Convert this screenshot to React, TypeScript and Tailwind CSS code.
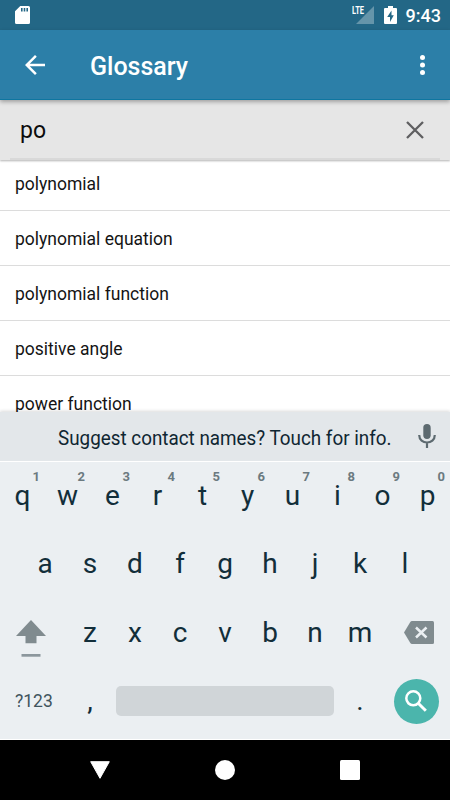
import React, { useState } from 'react';

// Define the type for a letter key
interface KeyItem {
    label: string;
    hint?: string;
}

const terms: string[] = [
    'polynomial',
    'polynomial equation',
    'polynomial function',
    'positive angle',
    'power function',
];

const topRow: KeyItem[] = [
    { label: 'q', hint: '1' },
    { label: 'w', hint: '2' },
    { label: 'e', hint: '3' },
    { label: 'r', hint: '4' },
    { label: 't', hint: '5' },
    { label: 'y', hint: '6' },
    { label: 'u', hint: '7' },
    { label: 'i', hint: '8' },
    { label: 'o', hint: '9' },
    { label: 'p', hint: '0' },
];

const middleRow: KeyItem[] = 'asdfghjkl'.split('').map((label) => ({ label }));
const bottomRow: KeyItem[] = 'zxcvbnm'.split('').map((label) => ({ label }));

const StatusBar: React.FC = () => (
    <div className="flex h-[30px] shrink-0 items-center bg-[#236786] pl-[15px] pr-[10px] text-white">
        <svg width="15" height="18" viewBox="0 0 15 18">
            <path fill="#fff" fillRule="evenodd" d="M5.3 0H13.5Q15 0 15 1.5V16.5Q15 18 13.5 18H1.5Q0 18 0 16.5V5.3ZM6 2V5.5H7.6V2ZM8.7 2V5.5H10.3V2ZM11.4 2V5.5H13V2Z" />
        </svg>
        <div className="relative ml-auto h-[18px] w-[22px]">
            <svg width="22" height="18" viewBox="0 0 22 18">
                <path fill="#fff" fillOpacity="0.3" d="M22 0V18H4Z" />
            </svg>
            <span className="absolute left-0 top-[-1px] origin-left scale-x-[0.68] text-[11px] font-bold leading-[11px]">LTE</span>
        </div>
        <svg width="13" height="18" viewBox="0 0 13 18" className="ml-[10px]">
            <path fill="#fff" fillRule="evenodd" d="M4 0H9V2H12Q13 2 13 3V17Q13 18 12 18H1Q0 18 0 17V3Q0 2 1 2H4ZM7.5 4.5L3.2 11H6V16L9.8 9.2H7.5Z" />
        </svg>
        <span className="ml-[9px] mr-[-1px] pt-[2px] text-[18px] font-medium leading-[30px]">9:43</span>
    </div>
);

const Header: React.FC = () => (
    <div className="relative z-10 flex h-[70px] shrink-0 items-center border-b border-[#0e76a0] bg-[#2c7fa8] pl-[25px] pr-[25px] text-white shadow-[0_2px_4px_rgba(0,0,0,0.3)]">
        <svg width="20" height="20" viewBox="4 4 16 16">
            <path fill="#fff" d="M20 11H7.83l5.59-5.59L12 4l-8 8 8 8 1.41-1.41L7.83 13H20v-2z" />
        </svg>
        <h1 className="ml-[45px] pt-[4px] text-[25px] font-medium leading-8">Glossary</h1>
        <svg width="5" height="20" viewBox="0 0 5 20" className="ml-auto">
            <circle cx="2.5" cy="2.5" r="2.5" fill="#fff" />
            <circle cx="2.5" cy="10" r="2.5" fill="#fff" />
            <circle cx="2.5" cy="17.5" r="2.5" fill="#fff" />
        </svg>
    </div>
);

const LetterKey: React.FC<{ item: KeyItem; onPress: (value: string) => void }> = ({ item, onPress }) => (
    <button onClick={() => onPress(item.label)} className="relative flex h-full w-[45px] items-center justify-center text-[28px] leading-8 text-[#122e3a]">
        {item.label}
        {item.hint && (
            <span className="absolute right-[5px] top-[7px] text-[13px] font-bold leading-4 text-[#6b7a80]">{item.hint}</span>
        )}
    </button>
);

const App: React.FC = () => {
    const [query, setQuery] = useState<string>('po');

    const handlePress = (value: string) => {
        setQuery(query + value);
    };

    return (
        <div className="flex h-[800px] w-[450px] flex-col overflow-hidden bg-white font-['Roboto',sans-serif]">
            <StatusBar />
            <Header />

            {/* Search field */}
            <div className="relative flex h-[60px] shrink-0 flex-col bg-[#e6e6e6] shadow-[0_1px_2px_rgba(0,0,0,0.3)]">
                <div className="flex flex-1 items-center justify-between pl-[20px] pr-[26px]">
                    <span className="pt-[3px] text-[23px] leading-7 text-[#0c0c0c]">{query}</span>
                    <button onClick={() => setQuery('')} className="pt-px">
                        <svg width="18" height="18" viewBox="0 0 18 18">
                            <path d="M1 1L17 17M17 1L1 17" stroke="#5f5f61" strokeWidth="2.3" fill="none" />
                        </svg>
                    </button>
                </div>
                <div className="mx-[10px] h-[2px] bg-[#d9d9d9]" />
            </div>

            {/* Matching terms */}
            <ul className="flex h-[252px] shrink-0 flex-col">
                {terms.map((term, index) => (
                    <li
                        key={term}
                        className={`flex shrink-0 items-center border-b border-[#dcdcdc] pl-[15px] text-[17.5px] text-[#141414] ${index === 0 ? 'h-[51px] pb-px' : 'h-[55px] pt-[2px]'}`}
                    >
                        {term}
                    </li>
                ))}
            </ul>

            {/* Keyboard */}
            <div className="relative flex h-[328px] shrink-0 flex-col border-b border-white bg-[#ebeff2] shadow-[0_-1px_3px_rgba(0,0,0,0.15)]">
                <div className="flex h-[50px] shrink-0 items-center justify-between border-b border-white bg-[#e3e7ea] pl-[58px] pr-[14px]">
                    <span className="w-[333px] origin-left scale-x-[0.942] whitespace-nowrap pt-[2px] text-[20px] text-[#0f2632]">Suggest contact names? Touch for info.</span>
                    <svg width="18" height="25" viewBox="0 0 18 25">
                        <rect x="5.3" y="0" width="7.4" height="15" rx="3.7" fill="#5d6a70" />
                        <path d="M1.2 11C1.2 21 16.8 21 16.8 11M9 18.5V24" stroke="#5d6a70" strokeWidth="2.2" fill="none" />
                    </svg>
                </div>
                <div className="flex h-[67px]">
                    {topRow.map((item) => (
                        <LetterKey key={item.label} item={item} onPress={handlePress} />
                    ))}
                </div>
                <div className="flex h-[69px] justify-center">
                    {middleRow.map((item) => (
                        <LetterKey key={item.label} item={item} onPress={handlePress} />
                    ))}
                </div>
                <div className="flex h-[69px] items-center">
                    <div className="flex w-[67.5px] justify-center pr-[5px]">
                        <svg width="30" height="37" viewBox="0 0 30 37" className="mt-[12px]">
                            <path fill="#808b8f" d="M15 0L30 16H20.5V23.3H9.5V16H0Z" />
                            <rect x="5.5" y="34" width="19" height="2.7" fill="#8c979d" />
                        </svg>
                    </div>
                    {bottomRow.map((item) => (
                        <LetterKey key={item.label} item={item} onPress={handlePress} />
                    ))}
                    <button onClick={() => setQuery(query.slice(0, -1))} className="ml-[21px] shrink-0 pb-[1px]">
                        <svg width="30" height="23" viewBox="0 0 30 23">
                            <path fill="#808b8f" d="M8 0H28.5Q30 0 30 1.5V21.5Q30 23 28.5 23H8Q7 23 6.3 22L0 11.5L6.3 1Q7 0 8 0Z" />
                            <path d="M12 6.5L22.5 16.5M22.5 6.5L12 16.5" stroke="#ebeff2" strokeWidth="2.5" fill="none" />
                        </svg>
                    </button>
                </div>
                <div className="flex h-[68px] items-center">
                    <span className="w-[67.5px] pl-[15px] text-[17.5px] text-[#3f545d]">?123</span>
                    <LetterKey item={{ label: ',' }} onPress={handlePress} />
                    <button onClick={() => handlePress(' ')} className="ml-[3.5px] h-[30px] w-[218px] rounded-[5px] bg-[#d0d5d8]" />
                    <span className="ml-[3.5px] h-full">
                        <LetterKey item={{ label: '.' }} onPress={handlePress} />
                    </span>
                    <div className="ml-[11px] flex size-[45px] items-center justify-center rounded-full bg-[#4bb5ac]">
                        <svg width="22" height="22" viewBox="0 0 22 22">
                            <circle cx="8.3" cy="8.3" r="7" stroke="#fff" strokeWidth="2.5" fill="none" />
                            <path d="M13.5 13.5L20.8 20.8" stroke="#fff" strokeWidth="3" />
                        </svg>
                    </div>
                </div>
            </div>

            {/* Navigation bar */}
            <div className="relative flex h-[60px] shrink-0 items-center justify-center gap-[105px] bg-black">
                <svg width="20" height="20" viewBox="0 0 20 20">
                    <path fill="#fff" stroke="#fff" strokeLinejoin="round" d="M0.7 1.7H19.3L10 18.3Z" />
                </svg>
                <div className="size-5 rounded-full bg-white" />
                <div className="size-5 rounded-[1.5px] bg-white" />
            </div>
        </div>
    );
};

export default App;
